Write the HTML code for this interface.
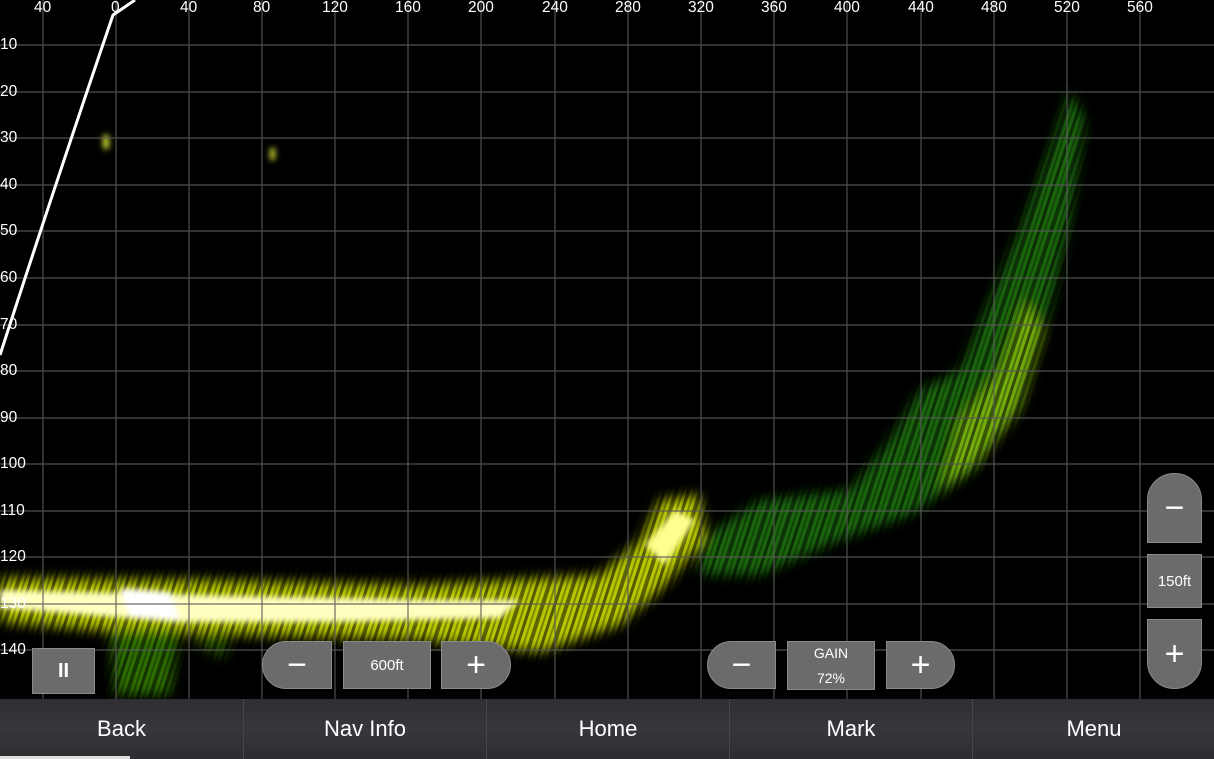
<!DOCTYPE html>
<html><head><style>
body{margin:0;width:1214px;height:759px;background:#000;overflow:hidden;position:relative;font-family:"Liberation Sans",sans-serif}
.lbl{position:absolute;color:#fff;font-size:15.5px;}
.btn{position:absolute;background:#6b6b6b;border:1px solid #8a8a8a;box-sizing:border-box;color:#fff;display:flex;align-items:center;justify-content:center;font-size:15px}
.bar{position:absolute;left:0;top:699px;width:1214px;height:60px;background:linear-gradient(#2e2e33 0,#36363c 50%,#2c2c31 100%)}
.bar div{position:absolute;top:0;height:60px;width:243px;color:#fff;font-size:22px;display:flex;align-items:center;justify-content:center;border-left:1px solid #45454b;box-sizing:border-box}
</style></head><body>
<svg width="1214" height="699" style="position:absolute;left:0;top:0">
<defs>
<filter id="b" x="-20%" y="-50%" width="140%" height="200%"><feGaussianBlur stdDeviation="6"/></filter>
<filter id="b2" x="-20%" y="-50%" width="140%" height="200%"><feGaussianBlur stdDeviation="3"/></filter>
<pattern id="st" width="23" height="60" patternUnits="userSpaceOnUse" patternTransform="rotate(18)">
<rect x="0" y="0" width="3" height="60" fill="#000" opacity="0.55"/>
<rect x="6" y="0" width="2" height="60" fill="#000" opacity="0.3"/>
<rect x="11" y="0" width="4" height="60" fill="#000" opacity="0.5"/>
<rect x="18" y="0" width="2" height="60" fill="#000" opacity="0.35"/>
</pattern>
</defs>
<g filter="url(#b)">
<path d="M700 540 L760 500 L850 490 L890 440 L920 390 L960 370 L990 300 L1020 230 L1050 150 L1070 90 L1085 120 L1070 220 L1050 310 L1020 400 L975 470 L910 515 L840 540 L760 575 L700 575 Z" fill="#238010" opacity="0.8"/>
<path d="M940 490 L960 420 L1000 370 L1025 300 L1045 330 L1020 410 L980 460 Z" fill="#8ac010" opacity="0.8"/>
<path d="M0 578 L200 580 L420 585 L600 575 L640 540 L660 500 L700 495 L705 540 L660 590 L620 625 L540 652 L420 640 L250 635 L120 632 L0 622 Z" fill="#b8c800"/>
<path d="M110 630 L180 630 L170 695 L115 695 Z" fill="#3a8a08" opacity="0.8"/>
<path d="M190 640 L230 630 L225 660 Z" fill="#3a8a08" opacity="0.6"/>
</g>
<rect x="0" y="60" width="1214" height="640" fill="url(#st)"/>
<g filter="url(#b2)">
<path d="M0 590 L240 596 L430 600 L520 600 L500 618 L330 622 L180 622 L0 608 Z" fill="#ffffc0"/>
<path d="M120 588 L170 592 L180 620 L130 618 Z" fill="#fff"/>
<path d="M645 545 L675 510 L695 520 L665 565 Z" fill="#ffff90"/>
<rect x="103" y="135" width="6" height="14" fill="#cdd830"/><rect x="270" y="148" width="5" height="12" fill="#cdd830"/>
</g>
<g stroke="#5a5a5a" stroke-width="1.2" opacity="0.9">
<line x1="43" y1="0" x2="43" y2="699"/><line x1="116" y1="0" x2="116" y2="699"/><line x1="189" y1="0" x2="189" y2="699"/><line x1="262" y1="0" x2="262" y2="699"/><line x1="335" y1="0" x2="335" y2="699"/><line x1="408" y1="0" x2="408" y2="699"/><line x1="481" y1="0" x2="481" y2="699"/><line x1="555" y1="0" x2="555" y2="699"/><line x1="628" y1="0" x2="628" y2="699"/><line x1="701" y1="0" x2="701" y2="699"/><line x1="774" y1="0" x2="774" y2="699"/><line x1="847" y1="0" x2="847" y2="699"/><line x1="921" y1="0" x2="921" y2="699"/><line x1="994" y1="0" x2="994" y2="699"/><line x1="1067" y1="0" x2="1067" y2="699"/><line x1="1140" y1="0" x2="1140" y2="699"/>
<line x1="0" y1="45" x2="1214" y2="45"/><line x1="0" y1="92" x2="1214" y2="92"/><line x1="0" y1="138" x2="1214" y2="138"/><line x1="0" y1="185" x2="1214" y2="185"/><line x1="0" y1="231" x2="1214" y2="231"/><line x1="0" y1="278" x2="1214" y2="278"/><line x1="0" y1="325" x2="1214" y2="325"/><line x1="0" y1="371" x2="1214" y2="371"/><line x1="0" y1="418" x2="1214" y2="418"/><line x1="0" y1="464" x2="1214" y2="464"/><line x1="0" y1="511" x2="1214" y2="511"/><line x1="0" y1="557" x2="1214" y2="557"/><line x1="0" y1="604" x2="1214" y2="604"/><line x1="0" y1="650" x2="1214" y2="650"/>
</g>
<path d="M0 355 Q60 170 113 15 L135 0" stroke="#fff" stroke-width="3" fill="none"/>
</svg>
<div class="lbl" style="left:34px;top:-1px">40</div><div class="lbl" style="left:111px;top:-1px">0</div><div class="lbl" style="left:180px;top:-1px">40</div><div class="lbl" style="left:253px;top:-1px">80</div><div class="lbl" style="left:322px;top:-1px">120</div><div class="lbl" style="left:395px;top:-1px">160</div><div class="lbl" style="left:468px;top:-1px">200</div><div class="lbl" style="left:542px;top:-1px">240</div><div class="lbl" style="left:615px;top:-1px">280</div><div class="lbl" style="left:688px;top:-1px">320</div><div class="lbl" style="left:761px;top:-1px">360</div><div class="lbl" style="left:834px;top:-1px">400</div><div class="lbl" style="left:908px;top:-1px">440</div><div class="lbl" style="left:981px;top:-1px">480</div><div class="lbl" style="left:1054px;top:-1px">520</div><div class="lbl" style="left:1127px;top:-1px">560</div>
<div class="lbl" style="left:0;top:36px">10</div><div class="lbl" style="left:0;top:83px">20</div><div class="lbl" style="left:0;top:129px">30</div><div class="lbl" style="left:0;top:176px">40</div><div class="lbl" style="left:0;top:222px">50</div><div class="lbl" style="left:0;top:269px">60</div><div class="lbl" style="left:0;top:316px">70</div><div class="lbl" style="left:0;top:362px">80</div><div class="lbl" style="left:0;top:409px">90</div><div class="lbl" style="left:0;top:455px">100</div><div class="lbl" style="left:0;top:502px">110</div><div class="lbl" style="left:0;top:548px">120</div><div class="lbl" style="left:0;top:595px">130</div><div class="lbl" style="left:0;top:641px">140</div>
<div class="btn" style="left:32px;top:648px;width:63px;height:46px;font-size:20px;font-weight:bold">II</div>
<div class="btn" style="left:262px;top:641px;width:70px;height:48px;border-radius:24px 0 0 24px;font-size:34px">−</div>
<div class="btn" style="left:343px;top:641px;width:88px;height:48px">600ft</div>
<div class="btn" style="left:441px;top:641px;width:70px;height:48px;border-radius:0 24px 24px 0;font-size:34px">+</div>
<div class="btn" style="left:707px;top:641px;width:69px;height:48px;border-radius:24px 0 0 24px;font-size:34px">−</div>
<div class="btn" style="left:787px;top:641px;width:88px;height:49px;flex-direction:column;font-size:14px;line-height:25px">GAIN<span>72%</span></div>
<div class="btn" style="left:886px;top:641px;width:69px;height:48px;border-radius:0 24px 24px 0;font-size:34px">+</div>
<div class="btn" style="left:1147px;top:473px;width:55px;height:70px;border-radius:27px 27px 0 0;font-size:34px">−</div>
<div class="btn" style="left:1147px;top:554px;width:55px;height:54px">150ft</div>
<div class="btn" style="left:1147px;top:619px;width:55px;height:70px;border-radius:0 0 27px 27px;font-size:34px">+</div>
<div class="bar">
<div style="left:0;border-left:none">Back</div><div style="left:243px">Nav Info</div><div style="left:486px">Home</div><div style="left:729px">Mark</div><div style="left:972px">Menu</div>
</div>
<div style="position:absolute;left:0;top:756px;width:130px;height:3px;background:#ddd"></div>
</body></html>
